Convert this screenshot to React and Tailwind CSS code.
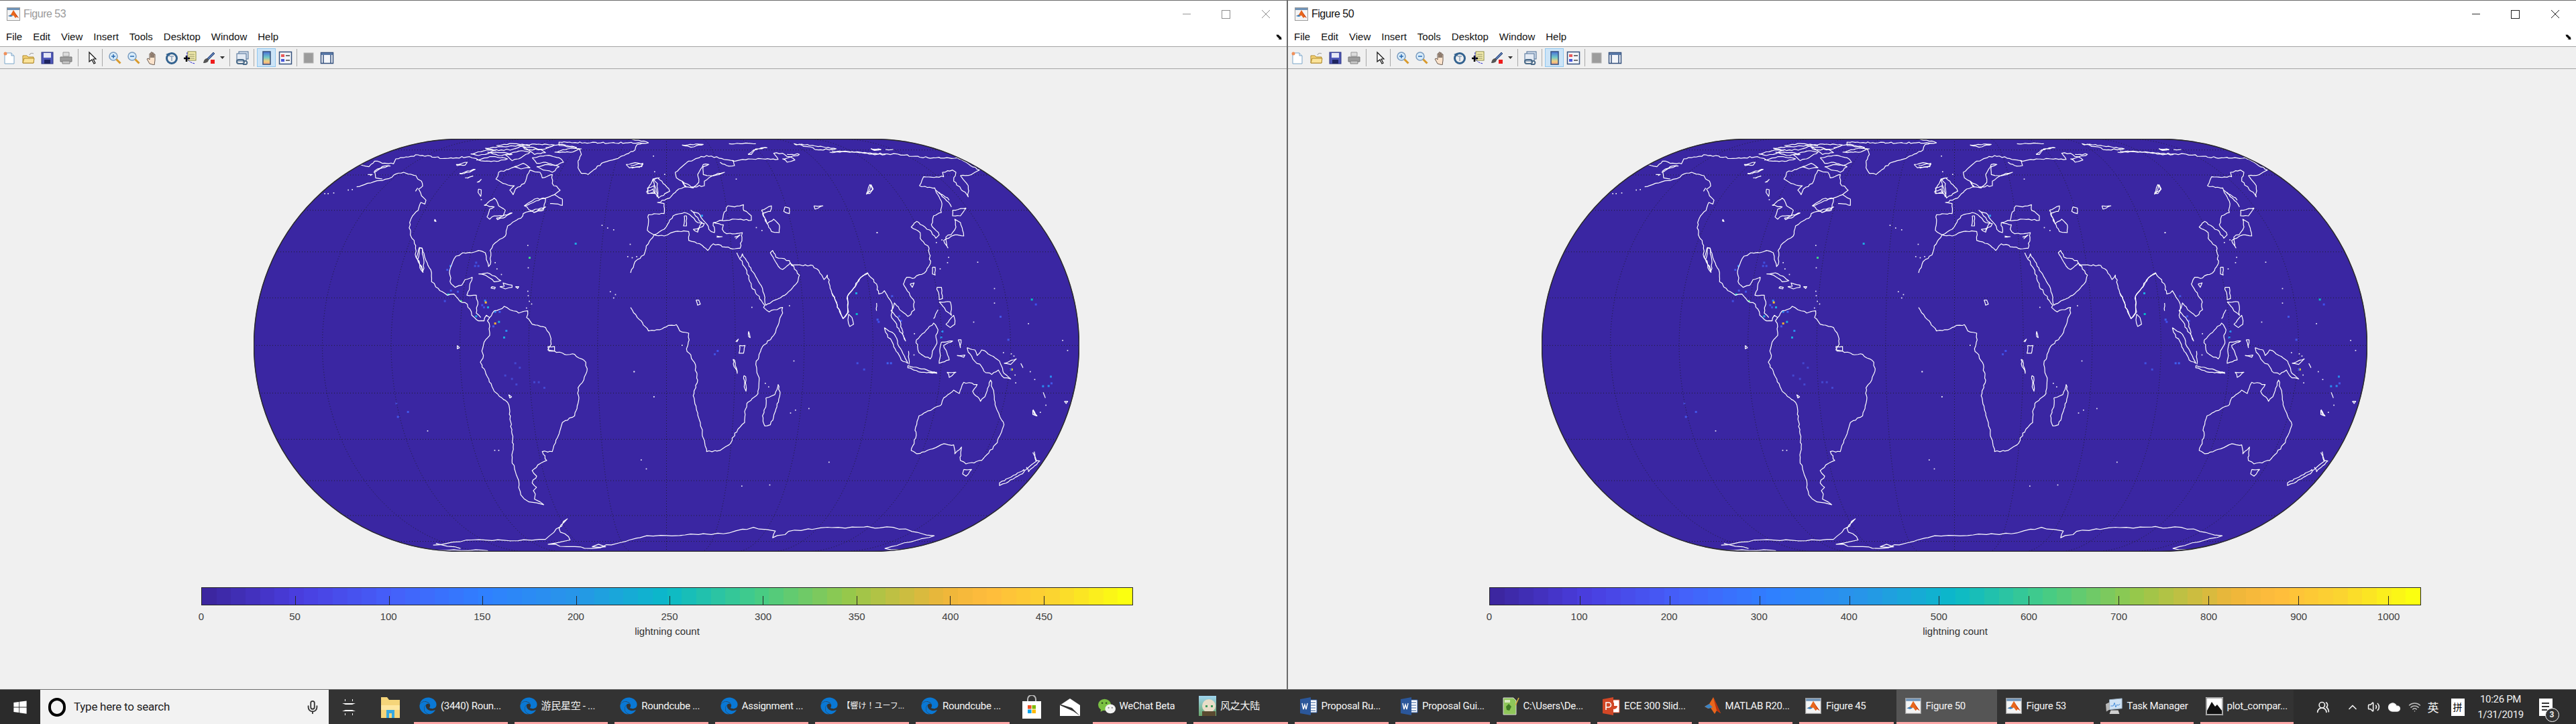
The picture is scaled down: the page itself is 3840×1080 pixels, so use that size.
import { FaEdge, FaWindows } from "react-icons/fa";
import { Mic, ChevronUp, Volume2, Cloud, Wifi, UsersRound } from "lucide-react";

// colormap stops read off the reference colorbar
const STOPS = [
  [0, [60, 38, 160]], [0.1, [74, 62, 224]], [0.2, [69, 96, 250]], [0.3, [47, 128, 255]],
  [0.4, [39, 150, 232]], [0.5, [10, 185, 200]], [0.6, [69, 204, 133]], [0.7, [151, 200, 74]],
  [0.8, [236, 182, 58]], [0.85, [255, 188, 60]], [0.92, [251, 212, 48]], [1, [251, 255, 16]],
];

function colorAt(t) {
  let i = 0;
  while (i < STOPS.length - 2 && t > STOPS[i + 1][0]) i++;
  const [a, ca] = STOPS[i];
  const [b, cb] = STOPS[i + 1];
  const k = (t - a) / (b - a);
  const c = ca.map((v, j) => Math.round(v + (cb[j] - v) * k));
  return `rgb(${c[0]},${c[1]},${c[2]})`;
}

// coast traces: A, B, C use 3x crop coordinates, Z the squashed overview crop
const COAST_A = [
  "155,215 190,205 230,193 270,187 300,178 330,158 365,150 385,158 420,165 428,180 445,190 450,212 432,225 445,255 465,275 460,292 442,285 430,320 405,345 392,375 395,430 412,455 418,490 420,530 445,570 452,598 445,590 430,550 436,487 448,490 465,545 490,600 490,640 520,670 560,700 590,695 615,725 650,740 670,790 700,815 725,815 735,790 750,800 740,815 750,840 750,880 725,910 715,950 722,970 708,1000 730,1040 770,1130 830,1180 840,1220 848,1310 855,1380 850,1440 865,1490 880,1530 880,1560",
  "820,435 795,450 765,475 752,500 755,550 745,572 735,540 730,510 700,500 670,510 630,510 600,525 585,550 570,600 578,650 595,665 625,655 640,630 672,620 660,660 648,700 690,700 697,730 690,780 710,800",
  "820,435 830,390 860,370 890,355 900,335 945,320 1000,305 950,330 905,300 950,270 1000,265 1040,250 1065,230 1030,200 1030,160 985,175 975,150 930,140 915,175 905,200 865,225 855,250 840,230 860,210 810,200 778,180 790,150 870,125",
  "1040,250 1075,270 1075,298 1020,290",
  "170,115 210,125 235,100 270,110 320,112 330,90 430,72 550,88 600,85 660,80 700,95 740,100",
  "230,150 270,130 305,122 270,124 235,145 240,175 270,180",
  "770,770 805,760 815,750 840,765 880,780 920,770 915,800 940,830 1000,845 1020,880 1025,920 1010,945 1040,950 1085,965 1130,965 1180,1000 1185,1040 1165,1090 1145,1115 1148,1170 1130,1240 1075,1270 1063,1310 1045,1360 1030,1400 985,1400 1005,1440 965,1460 940,1485 960,1510 940,1540 960,1560",
  "750,800 770,770",
  "1145,100 1160,70 1150,45 1060,30 1060,15 1200,18 1460,18 1410,25 1400,50 1350,75 1300,95 1250,110 1190,160 1160,155 1145,130 1145,100",
  "1360,115 1400,107 1435,115 1420,128 1375,130 1360,115",
  "665,68 720,55 780,50 730,70 700,75 665,68",
  "730,42 830,35 900,30 850,48 770,52 730,42",
  "690,95 760,80 830,90 790,100 735,100",
  "880,30 960,25 1040,28 1000,45 920,50 880,30",
  "820,72 880,55 930,60 890,85 850,98 820,72",
  "940,85 1000,75 1060,85 1080,105 1040,120 1000,105 960,110 940,85",
  "860,125 900,110 930,130 890,135 860,125",
  "960,125 1010,115 1060,125 1030,150 990,140 960,125",
  "1040,60 1100,45 1160,45 1120,60 1040,60",
  "1000,40 1060,25 1140,40",
  "740,60 800,62 850,70 790,75 740,60",
  "900,35 950,40 1000,62 950,70 900,35",
  "780,30 860,22 930,32",
  "600,115 650,105 640,118 605,120 600,115",
  "615,155 685,137 660,150 620,157 615,155",
  "640,175 675,167 650,177",
  "693,195 712,182 700,195",
  "700,225 712,228 710,258 698,240 700,225",
  "725,298 770,265 790,300 820,320 810,345 770,345 750,360 738,350 750,315 770,305 725,298",
  "780,355 850,332 820,350 785,362 780,355",
  "905,300 945,285 990,265 1000,268",
  "1000,268 990,320 945,330",
  "435,487 448,490 456,580 450,595 422,530 435,487",
  "700,605 740,600 800,635 770,640 730,610 700,605",
  "760,662 775,665 772,672 756,668 760,662",
  "795,662 815,660 810,645 850,655 850,665 820,672 795,662",
  "865,662 880,662 875,670 865,662",
  "1010,930 1040,930 1040,950 1015,950 1010,930",
  "835,1145 848,1155 840,1160 835,1145",
  "605,925 615,935 605,940 605,925",
  "505,360 510,370 503,368 505,360",
  "205,160 225,160 215,165",
  "418,235 428,220",
  "1455,235 1480,225 1490,245 1460,245 1455,235",
  "1480,180 1500,200 1500,260 1485,240",
];

const COAST_B = [
  "105,430 70,480 60,520 20,550 0,600",
  "0,755 30,800 80,860 130,855 170,835 205,832 220,860 260,870 262,900 250,940 285,1000 300,1080 280,1150 305,1250 330,1350 340,1400 400,1395 440,1370 480,1300 510,1270 510,1220 520,1185 570,1140 575,1080 560,1010 590,930 640,880 680,780 680,755 620,775 595,755 600,745 540,660 520,590 475,510",
  "490,535 500,515 530,570 590,670 605,745 690,700 740,650 755,610 715,555 680,585 660,570 625,510 635,500 650,530 710,545 725,565 815,567 855,610 865,630 880,610 900,690 950,805 970,780 970,705 990,680 1030,620 1060,600",
  "105,430 150,435 200,415 260,415 260,455 310,470 345,500 370,470 445,490 490,490 500,420 470,425 430,425 410,405 415,385 370,375 400,365 430,365 470,360 540,365 540,345 505,320 505,295 465,305 435,300 415,340 410,365",
  "585,320 630,300 625,325 590,335 610,380 640,360 665,385 665,420 630,415 615,385 595,345 585,320",
  "690,305 710,310 710,335 685,325 690,305",
  "820,300 860,300 825,315 820,300",
  "105,430 75,410 80,340 150,335 150,290 120,285 175,265 215,225 250,215 232,190 270,215 330,210 330,190 350,175 390,155 420,150 395,160 355,165 325,160 325,125 350,115 325,115 300,160 305,195 280,220 245,215 230,190 205,175 200,150 260,100 340,75 460,98 465,120 430,120 400,105",
  "105,430 150,405 190,345 240,330 265,340 300,375 330,380 300,410 320,375 290,345 270,320 310,340 330,370 360,415 375,420 370,375",
  "120,175 140,190 175,235 125,265 115,235 100,185 120,175",
  "75,220 105,210 110,240 75,245 75,220",
  "240,345 250,345 250,390 237,390 240,345",
  "280,405 305,400 300,418 280,405",
  "385,435 410,438 385,440",
  "465,440 490,430 470,448",
  "455,100 490,95 590,90 660,92 640,65 680,65 735,95 700,105 680,90 755,70 700,70",
  "525,70 550,50 610,40 560,45 540,70 525,70",
  "890,60 1000,60 1100,70 1140,70",
  "230,28 325,25 270,38 230,28",
  "440,22 500,22 560,22",
  "730,22 800,30 920,45 840,50 790,35 730,22",
  "1075,45 1120,50",
  "1055,245 1070,205 1083,228 1070,245 1055,245",
  "293,722 305,722 312,740 300,745 293,722",
  "487,925 512,925 505,960 485,960 487,925",
  "528,862 535,890 528,885 528,862",
  "470,908 482,897 475,910",
  "458,987 465,990 477,1050 463,1020 458,987",
  "507,1060 515,1065 516,1130 508,1110 507,1060",
  "605,1160 645,1145 660,1100 668,1145 650,1210 625,1280 600,1285 590,1240 605,1200 605,1160",
  "0,0 80,18",
  "0,120 55,110 50,125 5,132",
  "70,240 100,180 130,175",
];

const COAST_C = [
  "0,55 100,60 240,68 300,70 430,85 560,85 600,105 620,120 660,140 625,160 575,165 610,210 610,260 545,190 555,150 540,140 495,150 500,170 410,170 392,210 460,220 490,280 490,330 455,345 445,385 480,430 465,445 445,415 425,405 380,370 355,395 395,420 395,445 435,490 440,560 415,600 360,625 335,620 320,650 365,720 370,765 340,795 310,770 280,735 265,770 300,810 330,905 300,850 265,790 270,740 235,680 210,695 200,650 160,600 130,620 100,665 70,705 75,775 50,805 0,690",
  "175,45 220,48 190,52 175,45",
  "240,48 275,48",
  "465,230 525,275",
  "480,240 535,305",
  "75,785 90,800 97,830 80,840 72,810 75,785",
  "235,845 280,875 300,930 340,1005 310,990 275,920 240,865 235,845",
  "340,1015 400,1030 470,1050 400,1045 340,1025 340,1015",
  "343,950 345,1010",
  "378,900 455,825 475,855 465,880 470,915 450,950 440,985 400,965 385,945 378,900",
  "490,910 540,905 500,925 525,990 480,1005 485,930 490,910",
  "470,665 490,665 495,715 480,720 470,665",
  "480,730 530,730 535,790 510,770 480,730",
  "510,830 545,790 550,830 530,845 510,830",
  "455,805 475,765",
  "605,935 640,945 650,970 670,945 750,995 770,1050 800,1075 770,1070 745,1035 715,1055 680,1040 670,1020 630,985 610,955 605,935",
  "770,1005 825,985 800,1010 770,1005",
  "350,650 368,645 360,665 350,650",
  "450,575 462,575 462,610 450,605 450,575",
  "520,490 500,455 550,430 590,435 575,375 550,360 555,395 540,420 510,440 520,490",
  "540,320 600,310 575,345 540,345 540,320",
  "175,205 185,225 155,248 170,225 175,205",
  "375,1290 390,1240 450,1210 490,1190 500,1160 545,1125 570,1140 590,1090 650,1100 630,1130 665,1175 690,1140 710,1080 725,1140 730,1190 750,1240 770,1280 740,1360 670,1440 600,1455 575,1440 580,1380 550,1410 545,1370 500,1365 440,1390 380,1410 355,1395 375,1340 375,1290",
  "590,1480 625,1480 600,1510 585,1500 590,1480",
  "905,1400 912,1440 930,1442 880,1490 870,1470",
  "860,1480 800,1515 750,1540 750,1552 790,1535 860,1490 860,1480",
  "900,1212 918,1240 905,1235 900,1212",
  "515,1045 555,1045 525,1068 515,1045",
  "1040,1175 1055,1175 1048,1185 1040,1175",
  "845,1005 855,1025",
  "565,900 578,900 575,935 565,900",
  "945,1135 955,1160",
  "430,1045 470,1045",
  "560,970 595,968 590,978 560,970",
  "200,735 200,770",
];

const COAST_Z = [
  "506,1273 510,1300 525,1325 552,1335 535,1315 533,1285 539,1273",
  "350,1478 420,1460 490,1463 555,1458 575,1420 595,1385 580,1420 600,1460 560,1475 640,1490 690,1470 740,1445 880,1438 935,1415 975,1428 970,1452 1010,1425 1090,1415 1190,1415 1265,1445 1210,1470 1175,1490 1230,1500",
  "350,1495 400,1497 450,1498",
  "355,1472 400,1490",
  "640,1484 652,1475 665,1484 640,1484",
  "1445,1150 1452,1180 1430,1215",
  "1445,1000 1452,1020 1445,1015 1445,1000",
];

const DOTS_A = "10,243 25,243 50,240 115,227 133,225 710,270 918,475 1250,385 1275,397 1302,405 1376,470 1365,525 1385,530 1405,525 1287,682 1310,695 1302,710 918,680 920,700 925,725 912,755 935,737 770,1392 788,1392 470,1305 1393,1040 1482,1152 920,575 772,552 780,580 800,605";
const DOTS_B = "100,75 105,145 150,157 470,178 560,395 585,408 1100,418 708,745 540,752 228,922 14,1040 102,1152 600,1092 615,1108 713,1225 735,1212 795,1205 728,992 495,1552 620,1547 885,1445 45,1435 68,1475";
const DOTS_C = "200,418 520,528 515,552 482,580 465,462 490,450 725,733 632,818 877,825 817,1055 820,1090 765,955 800,960 812,970 367,870 365,965 885,1040 905,1075 1030,900 1052,945 725,668 650,550 930,1222 955,1190";

const SPECKS = [
  ["A", 570, 565, "#2e7ff5"], ["A", 556, 582, "#4356e8"], ["A", 685, 550, "#4050e0"], ["A", 680, 565, "#4050e0"],
  ["A", 695, 565, "#4050e0"], ["A", 560, 692, "#12c0c0"], ["A", 545, 722, "#4050e0"], ["A", 572, 675, "#4356e8"],
  ["A", 603, 680, "#4356e8"], ["A", 617, 722, "#3dd08a"], ["A", 725, 720, "#2a8cf2"], ["A", 712, 740, "#3f50f0"],
  ["A", 728, 728, "#ffc030"], ["A", 738, 750, "#1faae0"], ["A", 720, 750, "#4050e0"], ["A", 770, 770, "#2a8cf0"],
  ["A", 790, 770, "#3f60f0"], ["A", 770, 822, "#ffb030"], ["A", 762, 835, "#4356e8"], ["A", 787, 815, "#1faae0"],
  ["A", 820, 855, "#2a8cf0"], ["A", 810, 885, "#1faae0"], ["A", 924, 528, "#3dd08a"], ["A", 1130, 465, "#1faae0"],
  ["A", 685, 790, "#1faae0"], ["A", 860, 1000, "#4347d0"], ["A", 880, 1020, "#4347d0"], ["A", 815, 1055, "#4347d0"],
  ["A", 845, 1070, "#4347d0"], ["A", 865, 1095, "#4347d0"], ["A", 945, 1085, "#4347d0"], ["A", 965, 1085, "#4347d0"],
  ["A", 990, 1110, "#4347d0"], ["A", 380, 1218, "#4356e8"], ["A", 335, 1240, "#4356e8"], ["A", 328, 1180, "#4347d0"],
  ["B", 315, 340, "#2a9cf0"], ["B", 385, 945, "#3f50f0"], ["B", 372, 960, "#4050e0"], ["B", 1005, 687, "#1faae0"],
  ["B", 1007, 780, "#06bcc5"], ["B", 1100, 805, "#3f60f0"], ["B", 1010, 1000, "#4050e0"], ["B", 1040, 1028, "#4050e0"],
  ["C", 890, 715, "#06bcc5"], ["C", 908, 737, "#3f50f0"], ["C", 975, 1060, "#2a8cf0"], ["C", 978, 1090, "#4356e8"],
  ["C", 940, 1103, "#2a8cf0"], ["C", 965, 1102, "#2a8cf0"], ["C", 800, 1028, "#f9fb15"], ["C", 795, 1028, "#3f50f0"],
  ["C", 490, 858, "#2a8cf0"], ["C", 485, 885, "#2a8cf0"], ["C", 297, 790, "#4356e8"], ["C", 305, 810, "#3f50f0"],
  ["C", 205, 815, "#3f50f0"], ["C", 245, 1000, "#3f60f0"], ["C", 260, 1000, "#3f60f0"], ["C", 750, 792, "#4356e8"],
  ["C", 785, 895, "#4356e8"], ["C", 265, 700, "#4356e8"],
];

const LATS = [222.7, 260, 312.7, 374.7, 443.3, 514.3, 585.3, 654.3, 716, 768, 806.6];
const MERIDIANS = [-5, -4, -3, -2, -1, 1, 2, 3, 4, 5];
const ORIGIN = { A: [480, 206], B: [940, 206], C: [1240, 206] };

// breaks long straight trace segments up so they read as a coastline
function roughen(points) {
  const pts = points.split(" ").map((p) => p.split(",").map(Number));
  const out = [pts[0]];
  let seed = 7;
  const noise = () => {
    seed = (seed * 16807) % 2147483647;
    return (seed % 1000) / 500 - 1;
  };
  for (let i = 1; i < pts.length; i++) {
    const [x0, y0] = pts[i - 1];
    const [x1, y1] = pts[i];
    const len = Math.hypot(x1 - x0, y1 - y0);
    const n = Math.floor(len / 11);
    for (let j = 1; j < n; j++) {
      out.push([x0 + ((x1 - x0) * j) / n + noise() * 3.5, y0 + ((y1 - y0) * j) / n + noise() * 3.5]);
    }
    out.push(pts[i]);
  }
  return out.map((p) => p.join(",")).join(" ");
}

function Coast({ lines, transform, dots }) {
  return (
    <g transform={transform} fill="none" stroke="#ffffff" strokeWidth="1.2" strokeLinejoin="round">
      {lines.map((pts) => (
        <polyline key={pts} points={roughen(pts)} vectorEffect="non-scaling-stroke" />
      ))}
      {dots &&
        dots.split(" ").map((pt) => {
          const [x, y] = pt.split(",");
          return <rect key={pt} x={x} y={y} width="5" height="5" fill="#f1f0f8" stroke="none" />;
        })}
    </g>
  );
}

function WorldMap() {
  return (
    <svg className="block h-[616px] w-[1231px]" viewBox="378 206 1231 616">
      <defs>
        <clipPath id="earth">
          <rect x="378" y="206" width="1231" height="616" rx="308" />
        </clipPath>
      </defs>
      <rect x="378" y="206" width="1231" height="616" rx="308" fill="#3a26a2" />
      <g clipPath="url(#earth)">
        {SPECKS.map(([g, x, y, c]) => (
          <rect key={`${g}${x}${y}`} x={ORIGIN[g][0] + x / 3} y={ORIGIN[g][1] + y / 3} width="3" height="3" fill={c} />
        ))}
        <g fill="none" stroke="#1e1e2e" strokeWidth="1" strokeDasharray="1 3">
          {LATS.map((y) => (
            <line key={y} x1="378" x2="1609" y1={y} y2={y} />
          ))}
          <line x1="993.5" x2="993.5" y1="206" y2="822" />
          {MERIDIANS.map((k) => (
            <path
              key={k}
              d={`M${993.5 + k * 51.3} 206A${Math.abs(k) * 51.3} 308 0 0 ${k > 0 ? 1 : 0} ${993.5 + k * 51.3} 822`}
            />
          ))}
        </g>
        <Coast lines={COAST_A} dots={DOTS_A} transform="translate(480 206) scale(0.3333)" />
        <Coast lines={COAST_B} dots={DOTS_B} transform="translate(940 206) scale(0.3333)" />
        <Coast lines={COAST_C} dots={DOTS_C} transform="translate(1240 206) scale(0.3333)" />
        <Coast lines={COAST_Z} transform="translate(360 190) scale(0.8163 0.4209)" />
      </g>
      <rect x="378.5" y="206.5" width="1230" height="615" rx="307.5" fill="none" stroke="#2a2a2a" strokeWidth="1.5" />
    </svg>
  );
}

function Colorbar({ ticks, max }) {
  return (
    <div className="ml-[300px] mt-[53px] w-[1389px]">
      <div className="relative flex h-[27px] border-[1.5px] border-[#262626]">
        {Array.from({ length: 64 }, (_, i) => (
          <div key={i} className="flex-1" style={{ backgroundColor: colorAt(i / 63) }} />
        ))}
        {ticks.slice(1).map((t) => (
          <div
            key={t}
            className="absolute bottom-0 h-[13px] w-px bg-[#262626]"
            style={{ left: `${(t / max) * 100}%` }}
          />
        ))}
      </div>
      <div className="relative h-[24px] text-[15px] leading-[34px] text-[#404040]">
        {ticks.map((t) => (
          <span key={t} className="absolute -translate-x-1/2" style={{ left: `${(t / max) * 100}%` }}>
            {t}
          </span>
        ))}
      </div>
      <div className="pt-[6px] text-center text-[15px] leading-[18px] text-[#303030]">lightning count</div>
    </div>
  );
}

function MatlabIcon({ size = 20 }) {
  return (
    <svg width={size} height={size} viewBox="0 0 20 20" className="shrink-0">
      <rect x="0.5" y="0.5" width="19" height="19" fill="#f4f4f4" stroke="#9a9a9a" />
      <rect x="1" y="1" width="18" height="3" fill="#6f93b8" />
      <path d="M2 13l4-2 4-7 3 5 5 7-3-2-2 2-3-4-3 1z" fill="#e8661c" />
      <path d="M2 13l4-2 3 2-3 1z" fill="#3a84c4" />
      <path d="M10 4l3 5 5 7-3-2z" fill="#c23a12" />
    </svg>
  );
}

function Sep({ className }) {
  return <div className={`h-[26px] w-px bg-[#a8a8a8] ${className}`} />;
}

function Tool({ children, active }) {
  return (
    <div
      className={`flex h-[28px] w-[28px] items-center justify-center ${active ? "border border-[#90c8f0] bg-[#cce4f7]" : ""}`}
    >
      <svg width="21" height="21" viewBox="0 0 21 21">
        {children}
      </svg>
    </div>
  );
}

function Toolbar() {
  return (
    <div className="flex h-[34px] items-center border-y border-[#a4a4a4] bg-[#f0f0f0]">
      <Tool>
        <path d="M3 3h10l4 4v12H3z" fill="#fff" stroke="#7aa5c8" />
        <path d="M13 3v4h4" fill="#dfeaf4" stroke="#7aa5c8" />
        <circle cx="4" cy="4" r="2.5" fill="#f0905a" />
      </Tool>
      <Tool>
        <path d="M2 7h6l2 2h8v9H2z" fill="#f5d376" stroke="#b08a2c" />
        <path d="M2 18l2-7h15l-1 7z" fill="#fbe49a" stroke="#b08a2c" />
        <path d="M12 6c1-3 4-3 6-2" fill="none" stroke="#8a8a8a" />
      </Tool>
      <Tool>
        <rect x="2" y="2" width="17" height="17" fill="#4f58b8" stroke="#2a3380" />
        <rect x="5" y="3" width="11" height="7" fill="#e6e8f6" />
        <rect x="6" y="13" width="9" height="6" fill="#1e2560" />
      </Tool>
      <Tool>
        <path d="M6 2h9v6H6z" fill="#dcdcdc" stroke="#9a9a9a" />
        <path d="M2 9h17v7H2z" fill="#9c9c9c" stroke="#777" />
        <path d="M5 15h11v4H5z" fill="#c8c8c8" stroke="#808080" />
      </Tool>
      <Sep className="ml-[4px] mr-[6px]" />
      <Tool>
        <path d="M6 2l10 10h-4l3 6-2 1-3-6-4 3z" fill="#fff" stroke="#111" strokeWidth="1.2" />
      </Tool>
      <Sep className="ml-[1px] mr-[4px]" />
      <Tool>
        <circle cx="8" cy="8" r="6" fill="#d8ecfa" stroke="#7a9cc0" strokeWidth="1.5" />
        <path d="M5 8h6M8 5v6" stroke="#2a6ab0" strokeWidth="1.5" />
        <path d="M12.5 12.5l6 6" stroke="#d89a2c" strokeWidth="3" />
      </Tool>
      <Tool>
        <circle cx="8" cy="8" r="6" fill="#d8ecfa" stroke="#7a9cc0" strokeWidth="1.5" />
        <path d="M5 8h6" stroke="#2a6ab0" strokeWidth="1.5" />
        <path d="M12.5 12.5l6 6" stroke="#d89a2c" strokeWidth="3" />
      </Tool>
      <Tool>
        <path
          d="M6 19l-4-7 2-1 2 2V4h2v6-8h2v8-7h2v7-5h2v9l-1 7z"
          fill="#fbe3cc"
          stroke="#6a5a50"
          strokeLinejoin="round"
        />
      </Tool>
      <Tool>
        <circle cx="11" cy="11" r="7.5" fill="none" stroke="#33628f" strokeWidth="3" />
        <path d="M2 5l5-2 1 5z" fill="#33628f" />
        <path d="M8 8h6M11 8v7" stroke="#8aa0b8" strokeWidth="1.5" />
      </Tool>
      <Tool>
        <rect x="7" y="1" width="12" height="13" fill="#f6efb0" stroke="#8a8a40" />
        <path d="M9 5h8M9 8h8M9 11h8" stroke="#8a8a60" />
        <path d="M1 11h9M5 7v9" stroke="#000" strokeWidth="2.5" />
        <path d="M6 2c-1 8 0 15 12 17" fill="none" stroke="#2a2ad0" strokeDasharray="3 1" />
      </Tool>
      <Tool>
        <path d="M8 11L17 2l2 2-9 9z" fill="#5a78b0" stroke="#34507c" />
        <path d="M2 18c1-5 3-7 6-7l2 2c0 3-3 5-8 5z" fill="#555" />
        <rect x="13" y="13" width="6" height="6" fill="#ee1c1c" />
      </Tool>
      <svg width="13" height="28" viewBox="0 0 13 28">
        <path d="M3 12h7l-3.5 4z" fill="#333" />
      </svg>
      <Sep className="ml-[4px] mr-[4px]" />
      <Tool>
        <rect x="5" y="1" width="14" height="11" fill="#d4dfec" stroke="#4a6c94" />
        <rect x="2" y="4" width="14" height="11" fill="#e4ebf4" stroke="#4a6c94" />
        <path d="M5 13h5a3 3 0 010 6H5a3 3 0 010-6zM11 15h5a3 3 0 010 5h-5" fill="none" stroke="#4a6a88" strokeWidth="2" />
      </Tool>
      <Sep className="ml-[3px] mr-[4px]" />
      <Tool active>
        <defs>
          <linearGradient id="cbar" x1="0" y1="0" x2="0" y2="1">
            <stop offset="0" stopColor="#4a6fd8" />
            <stop offset="0.45" stopColor="#70c8c8" />
            <stop offset="0.75" stopColor="#f0d080" />
            <stop offset="1" stopColor="#f0a080" />
          </linearGradient>
        </defs>
        <rect x="5" y="1" width="11" height="19" fill="url(#cbar)" stroke="#34507c" strokeWidth="1.5" />
      </Tool>
      <Tool>
        <rect x="1.5" y="1.5" width="18" height="18" fill="#f4f6fa" stroke="#34507c" strokeWidth="1.5" />
        <rect x="4" y="5" width="5" height="4" fill="#e85a5a" />
        <rect x="4" y="12" width="5" height="4" fill="#4a5ad8" />
        <path d="M11 7h6M11 14h6" stroke="#444" strokeWidth="1.5" />
      </Tool>
      <Sep className="ml-[3px] mr-[2px]" />
      <Tool>
        <rect x="4" y="3" width="14" height="15" fill="#9c9c9c" stroke="#b4b4b4" />
      </Tool>
      <Tool>
        <rect x="1.5" y="2.5" width="18" height="16" fill="#f4f6fa" stroke="#34507c" strokeWidth="1.5" />
        <rect x="2" y="3" width="17" height="3" fill="#5a7aa8" />
        <path d="M5 6v12M16 6v12" stroke="#34507c" strokeWidth="1.5" />
      </Tool>
    </div>
  );
}

const MENUS = ["File", "Edit", "View", "Insert", "Tools", "Desktop", "Window", "Help"];

function FigureWindow({ title, active, ticks, max, className }) {
  const tone = active ? "#222" : "#8e8e8e";
  return (
    <div className={`flex h-[1029px] w-[1920px] flex-col bg-[#f0f0f0] ${className}`}>
      <div className="flex h-[40px] items-center bg-white pl-[10px]">
        <MatlabIcon />
        <span className={`ml-[5px] text-[16px] tracking-[-0.5px] ${active ? "text-[#111]" : "text-[#9a9a9a]"}`}>{title}</span>
        <div className="ml-auto flex items-center pr-[24px]">
          <svg width="14" height="14" viewBox="0 0 14 14" className="mr-[45px]" stroke={tone}>
            <path d="M1 7h12" />
          </svg>
          <svg width="13" height="13" viewBox="0 0 13 13" className="mr-[46px]" fill="none" stroke={tone}>
            <rect x="0.5" y="0.5" width="12" height="12" />
          </svg>
          <svg width="14" height="14" viewBox="0 0 14 14" stroke={tone}>
            <path d="M1 1l12 12M13 1L1 13" />
          </svg>
        </div>
      </div>
      <div className="flex h-[28px] items-center gap-[16px] bg-white pl-[9px] text-[15px] text-[#111]">
        {MENUS.map((m) => (
          <span key={m}>{m}</span>
        ))}
        <svg width="9" height="8" viewBox="0 0 10 10" className="ml-auto mr-[7px]">
          <path d="M0 1h4l5 5V3l1 7H3l3-1L1 4z" fill="#111" />
        </svg>
      </div>
      <Toolbar />
      <div className="min-h-0 flex-1">
        <div className="ml-[378px] pt-[104px]">
          <WorldMap />
        </div>
        <Colorbar ticks={ticks} max={max} />
      </div>
    </div>
  );
}

function EdgeIcon() {
  return <FaEdge className="h-[26px] w-[26px] text-[#0a78d4]" />;
}

function WordIcon() {
  return (
    <svg width="26" height="27" viewBox="0 0 26 27">
      <path d="M14 4h11v19H14z" fill="#fff" stroke="#2b579a" />
      <path d="M16 8h7M16 12h7M16 16h7M16 20h7" stroke="#2b579a" />
      <path d="M0 3l16-3v27L0 24z" fill="#2b579a" />
      <path d="M3 9l2 9 2-7 2 7 2-9" fill="none" stroke="#fff" strokeWidth="1.4" />
    </svg>
  );
}

function PptIcon() {
  return (
    <svg width="26" height="27" viewBox="0 0 26 27">
      <path d="M14 4h11v19H14z" fill="#fff" stroke="#d24726" />
      <path d="M17 8a5 5 0 105 5h-5z" fill="#d24726" />
      <path d="M0 3l16-3v27L0 24z" fill="#d24726" />
      <path d="M5 19V8h4a3 3 0 010 7H5" fill="none" stroke="#fff" strokeWidth="1.6" />
    </svg>
  );
}

function NppIcon() {
  return (
    <svg width="26" height="27" viewBox="0 0 26 27">
      <path d="M2 1h15l4 4v21H2z" fill="#8fc65a" stroke="#d8d8d8" />
      <path d="M4 4h8v4H4z" fill="#d8e8c0" />
      <path d="M6 14l4-4 4 4-3 6-4-1z" fill="#3f7a24" />
      <path d="M20 12L25 1" stroke="#d8b040" strokeWidth="1.6" />
    </svg>
  );
}

function MatlabMark() {
  return (
    <svg width="26" height="27" viewBox="0 0 26 27">
      <path d="M1 14l7-4 6-10 11 24-6-4-3 5-6-9-4 1z" fill="#e8661c" />
      <path d="M1 14l7-4 5 5-6 2z" fill="#3a84c4" />
      <path d="M14 0l11 24-6-4z" fill="#b8300e" />
    </svg>
  );
}

function WeChatIcon() {
  return (
    <svg width="30" height="27" viewBox="0 0 30 27">
      <ellipse cx="11" cy="11" rx="11" ry="10" fill="#7bc143" />
      <path d="M5 18l-1 5 6-3z" fill="#7bc143" />
      <ellipse cx="21" cy="18" rx="9" ry="8" fill="#f2f2f2" />
      <circle cx="7" cy="8" r="1.5" fill="#2f4f1c" />
      <circle cx="14" cy="8" r="1.5" fill="#2f4f1c" />
      <circle cx="18" cy="16" r="1.2" fill="#777" />
      <circle cx="24" cy="16" r="1.2" fill="#777" />
    </svg>
  );
}

function AvatarIcon() {
  return (
    <div className="relative h-[30px] w-[30px] overflow-hidden bg-gradient-to-b from-[#9fd4ee] to-[#6aa86a]">
      <div className="absolute left-[5px] top-[5px] h-[20px] w-[20px] rounded-full bg-[#e8ddc8]" />
      <div className="absolute bottom-0 left-[5px] h-[7px] w-[20px] bg-[#5a4a30]" />
      <div className="absolute left-[10px] top-[14px] h-[3px] w-[3px] bg-[#3a9a5a]" />
      <div className="absolute left-[18px] top-[14px] h-[3px] w-[3px] bg-[#3a9a5a]" />
    </div>
  );
}

function TaskManagerIcon() {
  return (
    <svg width="28" height="27" viewBox="0 0 28 27">
      <path d="M6 3l20-2v16L6 19z" fill="#cfe2f4" stroke="#9ab0c4" />
      <path d="M8 13l4 0 2-5 2 7 2-4 2 1 3-2" fill="none" stroke="#3a86d8" />
      <path d="M0 10l6-3v12l-5 3z" fill="#b8b8b8" />
      <path d="M8 20h12l2 6H6z" fill="#d0d0d0" />
    </svg>
  );
}

function PhotoIcon() {
  return (
    <svg width="26" height="27" viewBox="0 0 26 27">
      <rect width="26" height="27" fill="#fff" />
      <rect x="1" y="1" width="24" height="25" fill="#fff" stroke="#555" />
      <path d="M2 20L9 7l5 7 3-3 7 9v5H2z" fill="#111" />
    </svg>
  );
}

const LEFT_TASKS = [
  { label: "(3440) Roun...", icon: <EdgeIcon /> },
  { label: "游民星空 - ...", icon: <EdgeIcon /> },
  { label: "Roundcube ...", icon: <EdgeIcon /> },
  { label: "Assignment ...", icon: <EdgeIcon /> },
  { label: "【響け！ユーフ...", icon: <EdgeIcon />, small: true },
  { label: "Roundcube ...", icon: <EdgeIcon /> },
];

const RIGHT_TASKS = [
  { label: "WeChat Beta", icon: <WeChatIcon /> },
  { label: "风之大陆", icon: <AvatarIcon /> },
  { label: "Proposal Ru...", icon: <WordIcon /> },
  { label: "Proposal Gui...", icon: <WordIcon /> },
  { label: "C:\\Users\\De...", icon: <NppIcon /> },
  { label: "ECE 300 Slid...", icon: <PptIcon /> },
  { label: "MATLAB R20...", icon: <MatlabMark /> },
  { label: "Figure 45", icon: <MatlabIcon size={24} /> },
];

function Task({ label, icon, small, className = "w-[140.5px] pl-[8px]" }) {
  return (
    <div className={`flex h-[51px] shrink-0 items-center overflow-hidden border-b-[3px] border-[#ffa8a8] ${small ? "text-[12px]" : "text-[15px] tracking-[-0.3px]"} ${className}`}>
      <div className="flex w-[26px] shrink-0 justify-center">{icon}</div>
      <span className="ml-[6px] whitespace-nowrap text-[#f5f5f5]">{label}</span>
    </div>
  );
}

function StoreIcon() {
  return (
    <svg width="30" height="36" viewBox="0 0 30 36">
      <path d="M9 10V6a6 6 0 0112 0v4" fill="none" stroke="#bbb" strokeWidth="2" />
      <rect x="1" y="9" width="28" height="26" fill="#fff" />
      <rect x="9" y="15" width="5.5" height="5.5" fill="#f25022" />
      <rect x="15.5" y="15" width="5.5" height="5.5" fill="#7fba00" />
      <rect x="9" y="21.5" width="5.5" height="5.5" fill="#00a4ef" />
      <rect x="15.5" y="21.5" width="5.5" height="5.5" fill="#ffb900" />
    </svg>
  );
}

function MailIcon() {
  return (
    <svg width="30" height="26" viewBox="0 0 30 26">
      <path d="M15 0l15 10v16H0V10z" fill="#fff" />
      <path d="M0 10l20 9 10 7-12-12L2 9z" fill="#333" />
    </svg>
  );
}

function Taskbar() {
  return (
    <div className="flex h-[51px] items-center bg-[#333333] text-white">
      <div className="flex h-full w-[60px] items-center justify-center bg-[#2b2b2b]">
        <FaWindows className="h-[22px] w-[22px] text-white" />
      </div>
      <div className="flex h-full w-[430px] items-center bg-[#f2f2f2] pl-[12px] text-[#222]">
        <div className="h-[28px] w-[26px] rounded-full border-[4px] border-black" />
        <span className="ml-[12px] text-[17px] tracking-[-0.25px]">Type here to search</span>
        <Mic className="ml-auto mr-[13px] h-[22px] w-[22px] text-[#333]" />
      </div>
      <div className="ml-[20px] flex w-[20px] flex-col gap-[3px]">
        <div className="h-[3px] w-[12px] self-center border-x border-white" />
        <div className="h-[12px] w-[20px] border-x-[5px] border-y-2 border-white border-x-transparent" />
        <div className="h-[3px] w-[12px] self-center border-x border-white" />
      </div>
      <svg width="30" height="32" viewBox="0 0 30 32" className="ml-[37px]">
        <path d="M1 1h9l3 4h16v27H1z" fill="#f5d57a" />
        <rect x="1" y="13" width="28" height="7" fill="#ffe7a0" />
        <path d="M9 32V20h12v12h-4v-7h-4v7z" fill="#36a8e0" />
      </svg>
      <div className="ml-[20px] flex items-center gap-[10px]">
        {LEFT_TASKS.map((t, i) => (
          <Task key={i} label={t.label} icon={t.icon} small={t.small} className="w-[139.6px] pl-[8px]" />
        ))}
        <div className="flex w-[47px] justify-center">
          <StoreIcon />
        </div>
        <div className="flex w-[47px] justify-center">
          <MailIcon />
        </div>
        {RIGHT_TASKS.map((t) => (
          <Task key={t.label} label={t.label} icon={t.icon} />
        ))}
      </div>
      <div className="ml-[4px] w-[150px] shrink-0 bg-[#555555]">
        <Task label="Figure 50" icon={<MatlabIcon size={24} />} className="w-[150px] pl-[12px]" />
      </div>
      <div className="ml-[12px] flex items-center gap-[10px]">
        <Task label="Figure 53" icon={<MatlabIcon size={24} />} className="w-[132px] pl-0" />
        <Task label="Task Manager" icon={<TaskManagerIcon />} className="w-[139px] pl-[8px]" />
        <Task label="plot_compar..." icon={<PhotoIcon />} className="w-[139px] pl-[8px]" />
      </div>
      <div className="flex h-full min-w-0 flex-1 items-center bg-[#2d2d2d] pl-[34px] text-[#f0f0f0]">
        <UsersRound className="h-[20px] w-[20px]" />
        <ChevronUp className="ml-[24px] h-[20px] w-[20px]" />
        <Volume2 className="ml-[12px] h-[19px] w-[19px]" />
        <Cloud className="ml-[11px] h-[20px] w-[20px] fill-white" />
        <Wifi className="ml-[11px] h-[19px] w-[19px] text-[#bbb]" />
        <span className="ml-[10px] text-[17px] font-['Noto_Sans_CJK_SC',sans-serif]">英</span>
        <span className="ml-[18px] flex h-[26px] w-[20px] items-center justify-center border border-white bg-white text-[14px] text-black font-['Noto_Sans_CJK_SC',sans-serif]">拼</span>
        <div className="ml-[21px] flex w-[66px] flex-col items-center text-[15px] leading-[23px] tracking-[-0.3px]">
          <span>10:26 PM</span>
          <span>1/31/2019</span>
        </div>
        <div className="relative ml-[24px] h-[26px] w-[20px] bg-white">
          <div className="absolute left-[4px] top-[6px] h-[2px] w-[11px] bg-[#333]" />
          <div className="absolute left-[4px] top-[11px] h-[2px] w-[11px] bg-[#333]" />
          <div className="absolute left-[4px] top-[16px] h-[2px] w-[8px] bg-[#333]" />
          <div className="absolute -bottom-[9px] left-[9px] flex h-[21px] w-[21px] items-center justify-center rounded-full border border-white bg-[#333] text-[12px] font-bold">
            3
          </div>
        </div>
      </div>
    </div>
  );
}

export default function App() {
  return (
    <div className="flex h-[1080px] w-[3840px] flex-col overflow-hidden font-['Roboto','Noto_Sans_CJK_JP',sans-serif]">
      <div className="flex font-['Liberation_Sans',sans-serif]">
        <FigureWindow
          title="Figure 53"
          ticks={[0, 50, 100, 150, 200, 250, 300, 350, 400, 450]}
          max={497.5}
          className="border-r-2 border-t border-b border-[#6a6a6a]"
        />
        <FigureWindow
          title="Figure 50"
          active
          ticks={[0, 100, 200, 300, 400, 500, 600, 700, 800, 900, 1000]}
          max={1036}
          className="border-t border-b border-[#6a6a6a]"
        />
      </div>
      <Taskbar />
    </div>
  );
}
